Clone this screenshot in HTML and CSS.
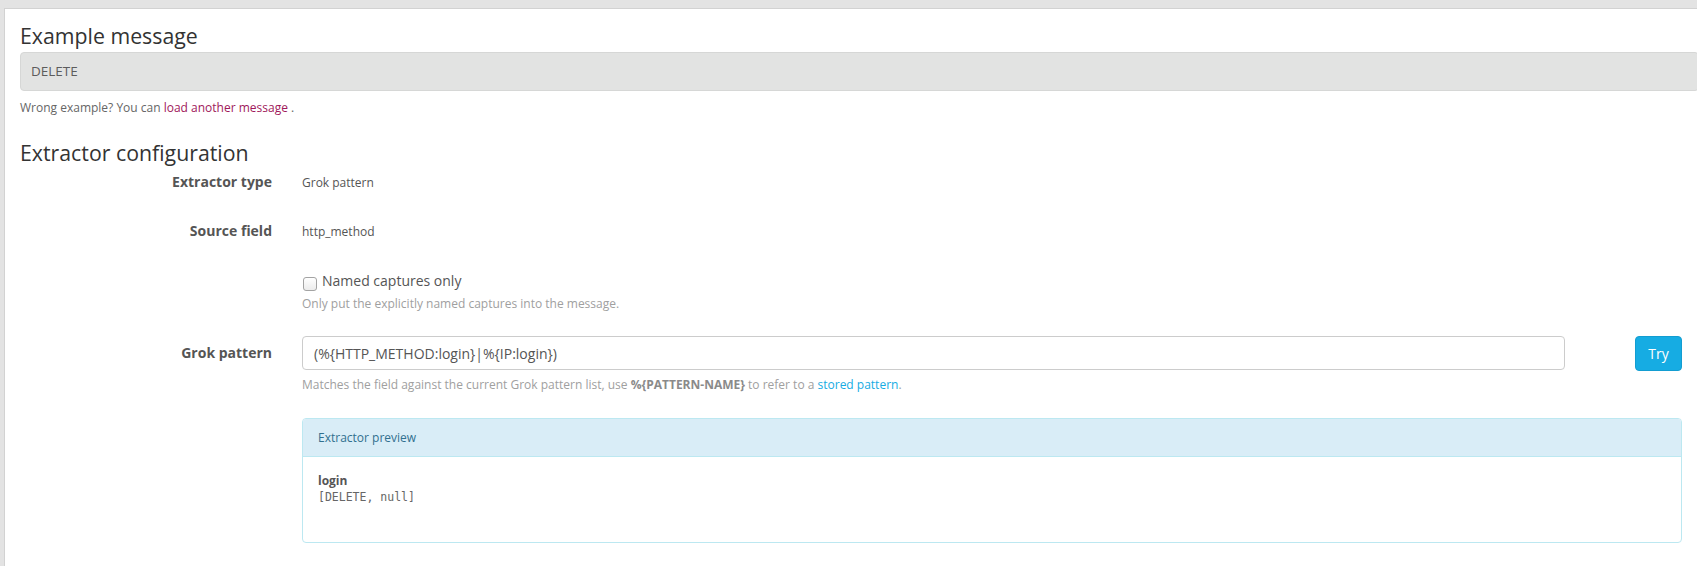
FILE: index.html
```html
<!DOCTYPE html>
<html lang="en">
<head>
    <meta charset="UTF-8" />
    <title>Edit extractor</title>
    <link rel="stylesheet" href="styles.css">
</head>
<body>
    <div class="page">
        <h2 class="title">Example message</h2>
        <div class="well">DELETE</div>
        <p class="hint">Wrong example? You can <a href="#" class="load-link">load another message</a> .</p>

        <h2 class="title section">Extractor configuration</h2>
        <form class="form">
            <div class="row row-static">
                <label class="lbl">Extractor type</label>
                <div class="static">Grok pattern</div>
            </div>
            <div class="row row-static">
                <label class="lbl">Source field</label>
                <div class="static">http_method</div>
            </div>
            <div class="row row-check">
                <div></div>
                <div>
                    <label class="check"><input type="checkbox" class="box" /> Named captures only</label>
                    <p class="help">Only put the explicitly named captures into the message.</p>
                </div>
            </div>
            <div class="row row-pattern">
                <label class="lbl">Grok pattern</label>
                <div>
                    <div class="pattern">
                        <input type="text" class="input" value="(%{HTTP_METHOD:login}|%{IP:login})" />
                        <button type="button" class="btn-try">Try</button>
                    </div>
                    <p class="help help-input">Matches the field against the current Grok pattern list, use <b>%{PATTERN-NAME}</b> to refer to a <a href="#" class="info-link">stored pattern</a>.</p>
                </div>
            </div>
            <div class="row">
                <div></div>
                <div class="preview">
                    <div class="preview-head">Extractor preview</div>
                    <div class="preview-body">
                        <div class="field-name">login</div>
                        <div class="field-value">[DELETE, null]</div>
                    </div>
                </div>
            </div>
        </form>
    </div>
</body>
</html>
```

FILE: styles.css
```css
html, body { margin: 0; overflow: hidden; }
body { font-family: "Open Sans", "Noto Sans", sans-serif; background: #e3e3e3; color: #555; font-size: 12px; line-height: 17px; }
.page { margin: 8px 0 0 4px; background: #fff; border-top: 1px solid #d2d2d2; border-left: 1px solid #d2d2d2; padding: 15px 15px 40px 15px; min-height: 520px; }

.title { margin: 0 0 5px; font-size: 21.3px; font-weight: 400; line-height: 1.1; color: #333; }
.title.section { margin: 24.5px 0 1px; }

.well { margin-right: -17px; background: #e2e3e2; border: 1px solid #d6d7d6; border-radius: 4px; padding: 9px 10px; font-size: 13.5px; line-height: 19px; color: #5c5c5c; }
.hint { margin: 8px 0 0; color: #666; }
.load-link { color: #a0185b; text-decoration: none; }

.row { display: grid; grid-template-columns: 252px 1fr; column-gap: 30px; margin-bottom: 15px; }
.row-static { align-items: center; min-height: 34px; }
.lbl { text-align: right; font-weight: 700; font-size: 14px; line-height: 20px; color: #555; }
.row-pattern .lbl { padding-top: 7px; }
.static { color: #555; }

.row-check { margin-bottom: 24px; }
.check { display: flex; align-items: center; gap: 5px; padding-top: 7px; font-size: 14px; line-height: 20px; color: #555; }
.box { appearance: none; margin: 7px 0 0 1px; width: 14px; height: 14px; border: 1px solid #a3a3a3; border-radius: 3px; background: linear-gradient(#fff, #ececec); }
.help { margin: 4px 0 0; color: #a0a0a0; }
.help b { color: #8a8a8a; }
.help-input { margin-top: 5px; }
.info-link { color: #16ace3; text-decoration: none; }

.row-pattern { margin-bottom: 25px; }
.pattern { display: grid; grid-template-columns: 1fr 47px; column-gap: 70px; }
.input { box-sizing: border-box; height: 34px; padding: 6px 11px; border: 1px solid #ccc; border-radius: 4px; font-family: inherit; font-size: 14px; color: #555; }
.btn-try { height: 35px; margin-top: 0; padding: 0; border: 1px solid #139dd1; border-radius: 4px; background: #16ace3; color: #fff; font-family: inherit; font-size: 14px; }

.preview { border: 1px solid #bce8f1; border-radius: 4px; }
.preview-head { background: #d9edf7; border-bottom: 1px solid #bce8f1; padding: 10px 15px; color: #31708f; border-radius: 3px 3px 0 0; }
.preview-body { padding: 15px 15px 36px; }
.field-name { font-weight: 700; color: #555; }
.field-value { font-family: "DejaVu Sans Mono", monospace; font-size: 11.5px; line-height: 17px; color: #666; }
```
